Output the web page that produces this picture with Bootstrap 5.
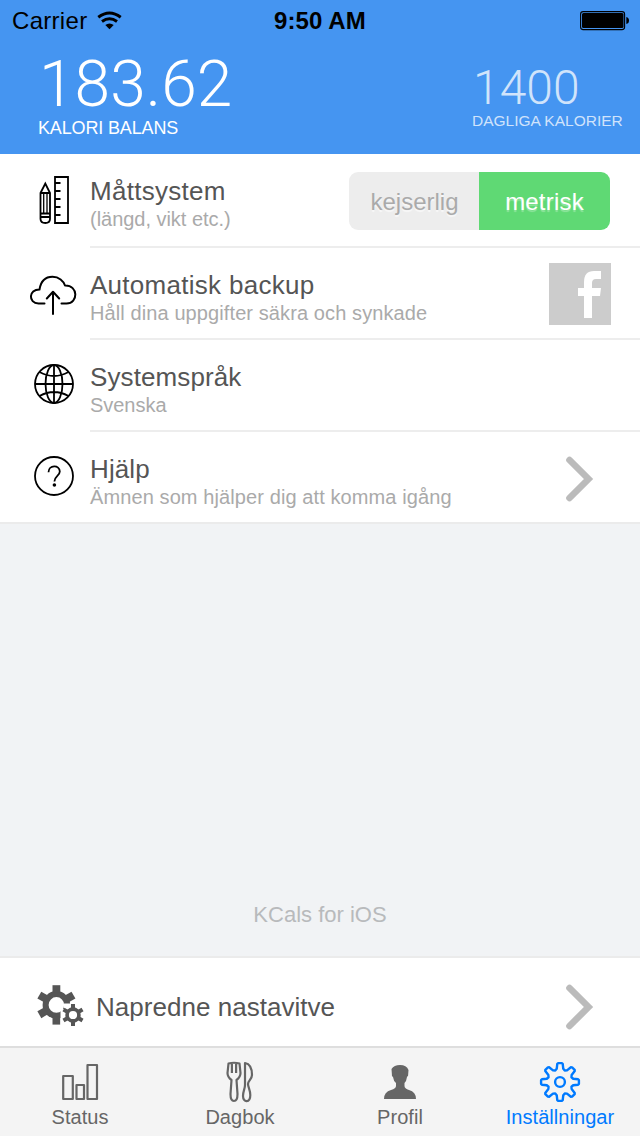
<!DOCTYPE html>
<html lang="sv">
<head>
<meta charset="utf-8">
<meta name="viewport" content="width=device-width, initial-scale=1">
<title>KCals</title>
<link href="https://cdn.jsdelivr.net/npm/bootstrap@5.3.0/dist/css/bootstrap.min.css" rel="stylesheet">
<style>
body{font-family:"Liberation Sans",Arial,sans-serif;background:#f1f3f5;color:#555;width:640px;height:1136px;overflow:hidden}
svg{display:block;flex:none}
.top-area{background:#4595f1;height:154px;color:#fff}
.status-line{height:41px;color:#000;font-size:24px;line-height:41px}
.carrier{width:274px;padding-left:12px;letter-spacing:.3px}
.clock{letter-spacing:.1px}
.figures{font-family:Roboto,sans-serif;font-weight:300}
.balance{padding-left:38px}
.fig-lg{font-size:64px;line-height:64px;margin-top:12px;letter-spacing:.1px;text-indent:1px}
.fig-md{font-size:48px;line-height:48px;margin-top:23px;text-indent:1px}
.cap-lg{font-size:18px;line-height:20px;margin-top:1px;letter-spacing:-.15px}
.cap-md{font-size:15.5px;line-height:18px}
.daily{color:rgba(255,255,255,.75);width:168px}
.setting{height:92px;background:#fff}
.setting:first-child{height:94px}
.setting .body-col{border-bottom:2px solid #ededed;padding-top:22px}
.setting:last-child{border-bottom:2px solid #ebebeb}
.setting:last-child .body-col{border:0}
.ttl{font-size:26px;line-height:30px;letter-spacing:.28px;white-space:nowrap}
.ttl.tight{letter-spacing:.1px}
.sub{font-size:20px;line-height:26px;letter-spacing:.1px;color:#aaa;white-space:nowrap}
.sub.tight{letter-spacing:-.03px}
.seg{width:261px;height:58px;margin:-4px 30px 0 0;border-radius:9px;overflow:hidden;font-size:24px;line-height:59px}
.seg div{text-align:center}
.seg .off{width:130px;background:#ededed;color:#aaa;text-shadow:0 2px 1px rgba(255,255,255,.6);text-indent:1px}
.seg .on{width:131px;background:#5fd974;color:#fff;letter-spacing:.2px;text-shadow:0 2px 1px rgba(255,255,255,.3)}
.fb{margin-top:-7px}
.about{font-size:22px;line-height:26px;color:#b8babc;margin-bottom:28px}
.advanced{height:90px;background:#fff;border-top:2px solid #ebebeb}
.advanced .ttl{margin-top:10px;letter-spacing:.03px}
.tabs{height:90px;background:#f4f4f4;border-top:2px solid #dedede;color:#666;font-size:20px;line-height:24px}
.tabs .tab-item{letter-spacing:.05px}
.tabs .active{color:#007aff}
</style>
</head>
<body class="d-flex flex-column">
<header class="top-area">
  <div class="status-line d-flex">
    <div class="carrier d-flex align-items-center">Carrier
      <svg width="28" height="22" viewBox="96 10 28 22" class="ms-2" fill="none" stroke="#000"><path d="M99.300 17.300Q110.500 8.800 121.700 17.300" stroke-width="3"/><path d="M103 21.500Q110.500 15.900 118 21.500" stroke-width="2.900"/><path d="M106.300 25Q110.500 21.800 114.700 25L110.500 29.200Z" fill="#000" stroke="none"/></svg>
    </div>
    <div class="fw-bold clock">9:50 AM</div>
    <svg class="ms-auto" width="62" height="41" viewBox="578 0 62 41"><rect x="580.600" y="11.600" width="44" height="18" rx="2.600" fill="none" stroke="#000" stroke-width="1.100"/><rect x="582" y="13" width="41.500" height="15" rx="1.500"/><path d="M626.300 17Q629 17.500 629 20.500T626.300 24Z"/></svg>
  </div>
  <div class="d-flex justify-content-between">
    <div class="balance"><div class="figures fig-lg">183.62</div><div class="cap-lg">KALORI BALANS</div></div>
    <div class="daily"><div class="figures fig-md">1400</div><div class="cap-md">DAGLIGA KALORIER</div></div>
  </div>
</header>

<main>
  <div class="setting d-flex">
    <svg width="90" height="92" viewBox="0 154 90 92" fill="none" stroke="#000" stroke-width="1.800"><path d="M55 177H68V223H55ZM55 183H60.500M55 191H60.500M55 199H60.500M55 207H60.500M55 215H60.500" /><path d="M40.500 193L45.300 183.500L50 193V219Q50 223 45.300 223T40.500 219ZM40.500 193H50M40.500 213.500H50M40.500 217H50"/><path d="M43.700 193V213M47 193V213" stroke-width="1.300"/></svg>
    <div class="body-col flex-grow-1 d-flex justify-content-between">
      <div><div class="ttl">Måttsystem</div><div class="sub tight">(längd, vikt etc.)</div></div>
      <div class="seg d-flex"><div class="off">kejserlig</div><div class="on">metrisk</div></div>
    </div>
  </div>
  <div class="setting d-flex">
    <svg width="90" height="92" viewBox="0 248 90 92" fill="none" stroke="#000" stroke-width="2" stroke-linecap="round" stroke-linejoin="round"><path d="M44.500 303.500H38.500C28 303 28.500 289.500 39.500 289.500C41 280 46 276.800 52.500 276.800C59 276.800 63.500 281 65 285.500C78.500 285 78.500 303.500 66.500 303.500H61.500M53 314V292M46.800 298.500L53 291.800L59.200 298.500"/></svg>
    <div class="body-col flex-grow-1 d-flex justify-content-between">
      <div><div class="ttl">Automatisk backup</div><div class="sub">Håll dina uppgifter säkra och synkade</div></div>
      <svg class="fb" width="91" height="62" viewBox="0 0 91 62"><path fill="#ccc" d="M0 0H62V62H0Z"/><path fill="#fff" d="M35 55V33H29V25H35V19Q35 8 45 8H52V16H47Q43 16 43 20V25H52L51 33H43V55Z"/></svg>
    </div>
  </div>
  <div class="setting d-flex">
    <svg width="90" height="92" viewBox="0 340 90 92" fill="none" stroke="#000" stroke-width="1.800"><circle cx="54" cy="384" r="19"/><ellipse cx="54" cy="384" rx="8.500" ry="19"/><path d="M54 365V403M35 384H73M39.500 372Q54 380 68.500 372M39.500 396Q54 388 68.500 396"/></svg>
    <div class="body-col flex-grow-1"><div class="ttl tight">Systemspråk</div><div class="sub tight">Svenska</div></div>
  </div>
  <div class="setting d-flex">
    <svg width="90" height="90" viewBox="0 432 90 90" fill="none" stroke="#000" stroke-width="1.800"><circle cx="54" cy="476" r="19"/><path d="M48.500 472.300C48.500 464.500 59.800 464.500 59.800 471.500C59.800 475.800 54.400 476 54.400 481.500"/><circle cx="54.400" cy="485" r="1.800" fill="#000" stroke="none"/></svg>
    <div class="body-col flex-grow-1 d-flex justify-content-between">
      <div><div class="ttl tight">Hjälp</div><div class="sub">Ämnen som hjälper dig att komma igång</div></div>
      <svg width="80" height="50" viewBox="560 454 80 50" fill="none" stroke="#bbb" stroke-width="6.600" stroke-linecap="round"><path d="M569.500 460L588.500 479L569.500 498"/></svg>
    </div>
  </div>
</main>

<div class="about text-center mt-auto">KCals for iOS</div>

<div class="advanced d-flex align-items-center">
  <svg width="96" height="88" viewBox="0 958 96 88">
    <defs><g id="cog"><circle r="10.800" fill="none" stroke-width="6" stroke="#555"/><path id="t" d="M-3.900-12V-19.700H3.900V-12Z"/><use href="#t" transform="rotate(60)"/><use href="#t" transform="rotate(120)"/><use href="#t" transform="rotate(180)"/><use href="#t" transform="rotate(240)"/><use href="#t" transform="rotate(300)"/></g></defs>
    <g fill="#555"><use href="#cog" transform="translate(56.400 1004.900)"/></g>
    <path fill="#fff" d="M60.500 1025V1009H64V1003.500H78V1025Z"/>
    <g fill="#555" transform="translate(73 1015)"><circle r="5.900" fill="none" stroke-width="3.600" stroke="#555"/><path d="M-2-6V-11H2V-6ZM-2 6V11H2V6Z" id="u"/><use href="#u" transform="rotate(60)"/><use href="#u" transform="rotate(120)"/></g>
  </svg>
  <div class="ttl">Napredne nastavitve</div>
  <svg class="ms-auto" width="80" height="88" viewBox="560 958 80 88" fill="none" stroke="#bbb" stroke-width="6.600" stroke-linecap="round"><path d="M569.500 988L588.500 1007L569.500 1026"/></svg>
</div>

<nav class="tabs d-flex text-center">
  <div class="tab-item col-3"><svg class="mx-auto" width="60" height="57" viewBox="50 1048 60 57" fill="none" stroke="#666" stroke-width="2.200" stroke-linejoin="round"><path d="M63.200 1076H72.800V1099H63.200ZM76.500 1085H84V1099H76.500ZM87.500 1065H97V1099H87.500Z"/></svg>Status</div>
  <div class="tab-item col-3"><svg class="mx-auto" width="60" height="57" viewBox="210 1048 60 57" fill="none" stroke="#666" stroke-width="2.200" stroke-linejoin="round"><path d="M228.500 1063.500Q234 1062 239.500 1063.500L240.500 1073Q240.500 1077 236.500 1080L237.500 1094Q237.500 1101 234 1101T230.500 1094L231.500 1080Q227.500 1077 227.500 1073ZM231.900 1063V1073M236.100 1063V1073"/><path d="M245 1063C250.500 1064 252 1070 252 1075C252 1079 248 1081 248 1084C248 1087 250.300 1090 250.300 1095C250.300 1103 243 1103 243 1096C243 1091 245 1089 245 1085Z"/></svg>Dagbok</div>
  <div class="tab-item col-3"><svg class="mx-auto" width="60" height="57" viewBox="370 1048 60 57" fill="#666"><path d="M384 1099Q384 1092 391 1090Q396 1088.500 396 1086V1083Q393.500 1081 393 1077Q391.500 1076 391.800 1073L391.500 1069Q394 1065 400 1065Q406.500 1065 408.500 1070L408.200 1074Q408.500 1076 407 1077Q406.500 1081 404.500 1083V1086Q404.500 1088.500 409 1090Q416 1092 416 1099Z"/></svg>Profil</div>
  <div class="tab-item col-3 active"><svg class="mx-auto" width="60" height="57" viewBox="-30 -34 60 57" fill="none" stroke="#007aff" stroke-width="2.400" stroke-linejoin="round"><circle r="4.900"/><path id="gear" d=""/></svg>Inställningar</div>
</nav>
<script src="https://cdn.jsdelivr.net/npm/bootstrap@5.3.0/dist/js/bootstrap.bundle.min.js"></script>
<script>
// Eight-tooth gear outline: tooth flanks, rounded tip and valley, as radius and angle in degrees.
const pts = [];
for (let i = 0; i < 8; i++)
  for (const [r, a] of [[12.4, -22.5], [13.6, -14], [18.3, -8.500], [19, -5.500], [19, 5.500], [18.3, 8.500], [13.6, 14]]) {
    const t = (i * 45 + a) * Math.PI / 180;
    pts.push((r * Math.cos(t)).toFixed(2) + ' ' + (r * Math.sin(t)).toFixed(2));
  }
document.getElementById('gear').setAttribute('d', 'M' + pts.join('L') + 'Z');
</script>
</body>
</html>
